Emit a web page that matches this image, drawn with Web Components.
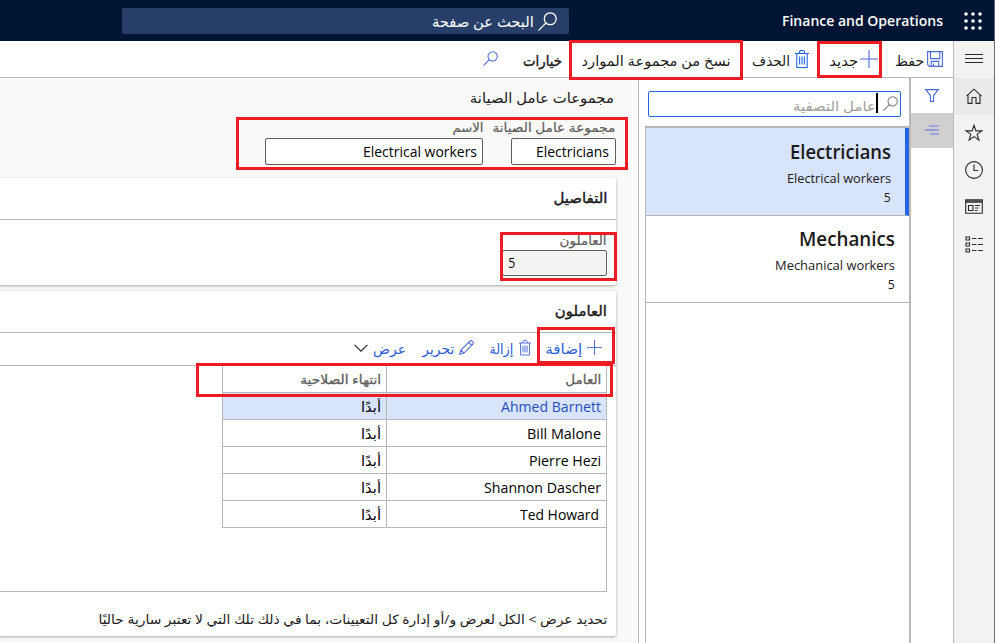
<!DOCTYPE html>
<html lang="ar" dir="rtl">
<head>
<meta charset="utf-8">
<title>Finance and Operations</title>
<style>
html,body{margin:0;padding:0}
body{width:995px;height:643px;overflow:hidden;background:#fff;font-family:"Open Sans","Noto Sans","DejaVu Sans",sans-serif;font-size:14px;color:#1b1a19}
</style>
</head>
<body>
<fo-app></fo-app>
<script>
// A text run that condenses or widens itself to the width given in "w".
class FoText extends HTMLElement{
  constructor(){super();this.attachShadow({mode:'open'}).innerHTML=`<style>
  :host{display:block;flex:none;white-space:nowrap;line-height:20px;height:20px}
  span{display:inline-block;transform-origin:100% 50%}
  :host([dir=ltr]) span{transform-origin:0 50%}</style><span><slot></slot></span>`;}
  connectedCallback(){
    const w=+this.getAttribute('w');this.style.width=w+'px';
    const s=this.shadowRoot.querySelector('span'),m=s.getBoundingClientRect().width;
    if(w&&m)s.style.transform=`scaleX(${w/m})`;
  }
}
const ICONS={
  waffle:[18,18,'<g fill="currentColor" stroke="none"><circle cx="2" cy="2" r="1.8"/><circle cx="9" cy="2" r="1.8"/><circle cx="16" cy="2" r="1.8"/><circle cx="2" cy="9" r="1.8"/><circle cx="9" cy="9" r="1.8"/><circle cx="16" cy="9" r="1.8"/><circle cx="2" cy="16" r="1.8"/><circle cx="9" cy="16" r="1.8"/><circle cx="16" cy="16" r="1.8"/></g>'],
  search:[16,16,'<circle cx="10.3" cy="5.7" r="5"/><path d="M6.7 9.3.5 15.5"/>'],
  save:[16,16,'<path d="M.6.6h14.8v14.8H2.6l-2-2zM3.5.6v7h9.3v-7M4.2 15.4v-5h7.6v5M6.5 12.5v3"/>'],
  plus:[18,18,'<path d="M9 0v18M0 9h18"/>'],
  trash:[14,18,'<path d="M0 3.5h14M4.5 3.5v-2l1-1h3l1 1v2M1.8 3.5v14h10.4v-14M4.6 6.5v8M7 6.5v8M9.4 6.5v8"/>'],
  pencil:[16,16,'<path d="M.8 15.2 2 10.7 11.6 1.2a1.7 1.7 0 0 1 2.5 0l.7.7a1.7 1.7 0 0 1 0 2.5L5.3 14zM10.3 2.5l3.2 3.2M2 10.7 5.3 14"/>'],
  chevron:[14,8,'<path d="m.6.8 6.4 6.4L13.4.8"/>'],
  menu:[18,11,'<path d="M0 1.5h18M0 5.5h18M0 9.5h18"/>'],
  home:[16,16,'<path d="m.5 8.2 7.5-7 7.5 7M2 7v8.4h4V9.5h4v5.9h4V7"/>'],
  star:[18,17,'<path d="m9 1.3 1.9 5.6h6l-4.8 3.5 1.8 5.7L9 12.6l-4.9 3.5 1.8-5.7L1.100 6.900h6z"/>'],
  clock:[18,18,'<circle cx="9" cy="9" r="8.4"/><path d="M9 3.600V9.500h4.300"/>'],
  board:[18,15,'<path d="M.7.7h16.600v13.600H.7zM.7 3.200h16.600" /><path d="M.7 2h16.600" stroke-width="1.500"/><path d="M3.500 6.500h4.500v5H3.500zM10 6.500h5M10 9h3.500M10 11.500h2.500"/>'],
  modules:[18,17,'<path d="M1 1h3.500v3H1zM1 7h3.500v3H1zM1 13h3.500v3H1zM7 2.500h4.500M13 2.500h5M7 8.500h4.500M13 8.500h5M7 14.500h4.500M13 14.500h5"/>'],
  funnel:[14,13,'<path d="M.6.600h12.800L8.600 6.300v6.100H5.400V6.300z"/>'],
  lines:[14,10,'<path d="M4 1h10M5 9h9" stroke="#9da5e0" stroke-width="1.800"/><path d="M0 5h14" stroke="#5b74dd"/>']
};
class FoIcon extends HTMLElement{
  constructor(){super();this.attachShadow({mode:'open'});}
  connectedCallback(){
    const [w,h,d]=ICONS[this.getAttribute('name')],W=this.getAttribute('w')||w;
    this.shadowRoot.innerHTML=`<style>:host{display:block;flex:none;line-height:0;color:#4a6ad8}</style><svg width="${W}" height="${h*W/w}" viewBox="0 0 ${w} ${h}" fill="none" stroke="currentColor" stroke-width="1.100" overflow="visible">${d}</svg>`;
  }
}
const def=(name,html)=>customElements.define(name,class extends HTMLElement{
  constructor(){super();const t=document.createElement('template');t.innerHTML=html;
    this.attachShadow({mode:'open'}).append(t.content.cloneNode(true));}
});
customElements.define('fo-text',FoText);
customElements.define('fo-icon',FoIcon);

// Outlined callout laid over the page.
customElements.define('fo-mark',class extends HTMLElement{
  connectedCallback(){
    const [l,t,r,b]=this.getAttribute('box').split(' ').map(Number);
    this.attachShadow({mode:'open'}).innerHTML=`<style>:host{position:absolute;z-index:5;box-sizing:border-box;border:3px solid #ed1c24;left:${l}px;top:${t}px;width:${r-l}px;height:${b-t}px;pointer-events:none}</style>`;
  }
});

def('fo-header',`<style>
:host{display:flex;height:41px;background:#001433;color:#fff;align-items:center;box-sizing:border-box;padding-right:12px}
fo-icon{color:#fff}
.t{margin-right:21px;font-weight:600;font-size:14.5px}
.s{display:flex;align-items:center;width:447px;height:26px;margin-right:213px;margin-top:1px;border-radius:2px;background:#273f68;box-sizing:border-box;padding-right:12px}
.s fo-text{margin-right:4px;font-size:15px}
</style>
<fo-icon name="waffle"></fo-icon><fo-text class="t" w="161" dir="ltr">Finance and Operations</fo-text>
<div class="s"><fo-icon name="search" w="19"></fo-icon><fo-text w="102">البحث عن صفحة</fo-text></div>`);

def('fo-rail',`<style>
:host{display:flex;flex-direction:column;width:41px;box-sizing:border-box;background:#f3f2f1;border-left:1px solid #bab8b7}
div{display:flex;align-items:center;justify-content:center;height:37px;flex:none}
div:first-child{height:35px;padding-top:5px;box-sizing:border-box}.h{background:#ebeae8}
fo-icon{color:#2b2a29;margin-top:-2px}div:first-child fo-icon{margin-top:2px}
</style>
<div><fo-icon name="menu"></fo-icon></div><div class="h"><fo-icon name="home"></fo-icon></div><div><fo-icon name="star"></fo-icon></div><div><fo-icon name="clock"></fo-icon></div><div><fo-icon name="board"></fo-icon></div><div style="height:38px"><fo-icon name="modules"></fo-icon></div>`);

def('fo-toolbar',`<style>
:host{display:flex;height:37px;flex:none;box-sizing:border-box;border-bottom:1px solid #bab8b7;padding-right:10px;align-items:center;font-size:14px}
fo-text{padding-top:3px}
</style>
<fo-icon name="save"></fo-icon><fo-text w="29" style="margin-right:3px">حفظ</fo-text>
<fo-icon name="plus" style="margin-right:17px"></fo-icon><fo-text w="29" style="margin-right:2px">جديد</fo-text>
<fo-icon name="trash" style="margin-right:20px;color:#2266e3"></fo-icon><fo-text w="38" style="margin-right:5px">الحذف</fo-text>
<fo-text w="149" style="margin-right:21px">نسخ من مجموعة الموارد</fo-text>
<fo-text w="39" style="margin-right:20px;-webkit-text-stroke:.4px">خيارات</fo-text>
<fo-icon name="search" w="15" style="margin-right:25px;margin-top:-2px"></fo-icon>`);

def('fo-side',`<style>
:host{display:flex;flex-direction:column;width:42px;flex:none}
div{height:35px;display:flex;align-items:center;justify-content:center}.a{background:#d2d0ce}
.a fo-icon{margin-top:-2px}
</style><div><fo-icon name="funnel"></fo-icon></div><div class="a"><fo-icon name="lines"></fo-icon></div>`);

def('fo-item',`<style>
:host{display:flex;flex-direction:column;height:87px;border-bottom:1px solid #bab8b7;box-sizing:content-box;padding-right:14px}
:host([selected]){background:#d8e3fc;border-right:4px solid #2266e3;}
.a{padding-top:14px;font-size:19.500px;font-weight:600}.b{padding-top:6px;font-size:13.500px}.c{font-size:13.500px;margin-top:-1px}
:host(:not([selected])) .a{padding-top:13px}
</style><div class="a"><slot name="title"></slot></div><div class="b"><slot name="sub"></slot></div><div class="c"><slot name="count"></slot></div>`);

def('fo-list',`<style>
:host{display:flex;flex-direction:column;width:273px;flex:none;box-sizing:border-box;border-right:2px solid #bab8b7;border-left:1px solid #bab8b7;padding-left:6px;background:#fff}
.f{display:flex;align-items:center;height:26px;box-sizing:border-box;margin:13px 8px 0 3px;border:1px solid #2266e3;border-radius:2px;padding-right:2px;color:#a19f9d;flex:none}
.f fo-icon{color:#7a7978;margin-top:-2px}.f i{width:2px;height:20px;background:#000;margin-right:5px;margin-top:-3px}
.f fo-text{margin-top:3px}
.l{margin-top:9px;flex:1;border-top:2px solid #bab8b7;border-left:1px solid #bab8b7}
fo-item:not([selected]){height:86px}
</style>
<div class="f"><fo-icon name="search" w="15"></fo-icon><i></i><fo-text w="83" style="font-size:13.5px">عامل التصفية</fo-text></div>
<div class="l">
<fo-item selected><fo-text slot="title" dir="ltr" w="101">Electricians</fo-text><fo-text slot="sub" dir="ltr" w="104">Electrical workers</fo-text><fo-text slot="count" w="7">5</fo-text></fo-item>
<fo-item><fo-text slot="title" dir="ltr" w="96">Mechanics</fo-text><fo-text slot="sub" dir="ltr" w="120">Mechanical workers</fo-text><fo-text slot="count" w="7">5</fo-text></fo-item>
</div>`);

def('fo-field',`<style>
:host{display:block}
.b{height:27px;box-sizing:border-box;border:1px solid #605e5c;border-radius:2px;background:#fff;display:flex;align-items:center;padding:0 6px;color:#000;font-size:14.500px}
:host([readonly]) .b{background:#f3f2f1;justify-content:flex-end;height:26px;padding-left:5px}
:host([readonly]) .l{height:19px}
.l{font-size:12.500px;color:#605e5c;height:20px;-webkit-text-stroke:.2px}
</style><div class="l"><slot name="label"></slot></div><div class="b"><slot></slot></div>`);

def('fo-card',`<style>
:host{display:flex;flex-direction:column;background:#fff;width:617px;box-sizing:border-box;border-radius:0 2px 2px 0;box-shadow:0 1px 3px #0005}
.h{height:42px;box-sizing:border-box;border-bottom:1px solid #bab8b7;padding:10px 9px 0 0;font-size:14px;-webkit-text-stroke:.4px;flex:none}
</style><div class="h"><slot name="title"></slot></div><slot></slot>`);

def('fo-actions',`<style>
:host{display:flex;align-items:center;height:33px;box-sizing:border-box;border-bottom:1px solid #bab8b7;padding-right:14px;color:#2b5bd7;flex:none;font-size:14px}
fo-icon{margin-top:-3px}
</style>
<fo-icon name="plus" w="15"></fo-icon><fo-text w="37" style="margin-right:5px">إضافة</fo-text>
<fo-icon name="trash" w="12" style="margin-right:14px"></fo-icon><fo-text w="24" style="margin-right:6px">إزالة</fo-text>
<fo-icon name="pencil" w="15" style="margin-right:15px"></fo-icon><fo-text w="32" style="margin-right:5px">تحرير</fo-text>
<fo-text w="33" style="margin-right:16px">عرض</fo-text><fo-icon name="chevron" style="margin-right:5px;color:#222"></fo-icon>`);

const people=[['Ahmed Barnett',100,0],['Bill Malone',74,0],['Pierre Hezi',72,0],['Shannon Dascher',117,0],['Ted Howard',79,2]];
def('fo-table',`<style>
:host{display:flex;flex-direction:column;width:608px;height:226px;box-sizing:border-box;border:solid #bab8b7;border-width:0 1px 1px 0;font-size:14.500px;color:#000;flex:none}
.r{display:grid;grid-template-columns:219px 164px;width:384px;height:27px;box-sizing:border-box;border-bottom:1px solid #bab8b7;border-left:1px solid #bab8b7}
.r>div{display:flex;align-items:center;padding-right:5px;padding-top:2px;box-sizing:border-box}
.r>div:last-child{border-right:1px solid #bab8b7}
.h{color:#605e5c;font-size:12.500px;-webkit-text-stroke:.3px}.s{background:#d8e3fc}.s>div:first-child{color:#2650b8}
</style><div class="r h"><div><fo-text w="36">العامل</fo-text></div><div><fo-text w="81">انتهاء الصلاحية</fo-text></div></div>`
+people.map((p,i)=>`<div class="r ${i?'':'s'}"><div style="padding-right:${5+p[2]}px"><fo-text dir="ltr" w="${p[1]}">${p[0]}</fo-text></div><div style="font-size:14px"><fo-text w="20">أبدًا</fo-text></div></div>`).join(''));

def('fo-main',`<style>
:host{display:block;width:638px;flex:none;overflow:hidden;background:#faf9f8}
.w{width:616px;margin-right:22px}
.t{padding:10px 2px 0 0;font-size:14px;height:20px}
.f{display:flex;gap:28px;padding-top:10px}
.d{padding:11px 9px 0 0}
.n{padding:17px 9px 0 0;font-size:13px}
</style><div class="w">
<div class="t"><fo-text w="144">مجموعات عامل الصيانة</fo-text></div>
<div class="f"><fo-field style="width:105px"><fo-text slot="label" w="123" style="margin-right:1px">مجموعة عامل الصيانة</fo-text><fo-text dir="ltr" w="73">Electricians</fo-text></fo-field>
<fo-field style="width:218px"><fo-text slot="label" w="31">الاسم</fo-text><fo-text dir="ltr" w="114" style="margin-right:-1px">Electrical workers</fo-text></fo-field></div>
<fo-card style="height:107px;margin-top:13px"><fo-text slot="title" w="54">التفاصيل</fo-text>
<div class="d"><fo-field readonly style="width:105px"><fo-text slot="label" w="47">العاملون</fo-text><fo-text w="7">5</fo-text></fo-field></div></fo-card>
<fo-card style="height:345px;margin-top:6px"><fo-text slot="title" w="52">العاملون</fo-text>
<fo-actions></fo-actions><div style="padding-right:9px"><fo-table></fo-table></div>
<div class="n"><fo-text w="509">تحديد عرض &gt; الكل لعرض و/أو إدارة كل التعيينات، بما في ذلك تلك التي لا تعتبر سارية حاليًا</fo-text></div></fo-card>
</div>`);

def('fo-app',`<style>
:host{display:block;position:relative;width:995px;height:643px;box-sizing:border-box;border-right:1px solid #6b6a69;overflow:hidden}
.b{display:flex;height:602px}.c{display:flex;flex-direction:column;flex:1;min-width:0}.p{display:flex;flex:1;min-height:0}
</style><fo-header></fo-header><div class="b"><fo-rail></fo-rail><div class="c"><fo-toolbar></fo-toolbar><div class="p"><fo-side></fo-side><fo-list></fo-list><fo-main></fo-main></div></div></div>
<fo-mark box="817 41 882 78"></fo-mark><fo-mark box="569 40 743 80"></fo-mark><fo-mark box="236 117 628 170"></fo-mark><fo-mark box="500 232 617 281"></fo-mark><fo-mark box="537 327 615 364"></fo-mark><fo-mark box="196 363 613 397"></fo-mark>`);
</script>
</body>
</html>
